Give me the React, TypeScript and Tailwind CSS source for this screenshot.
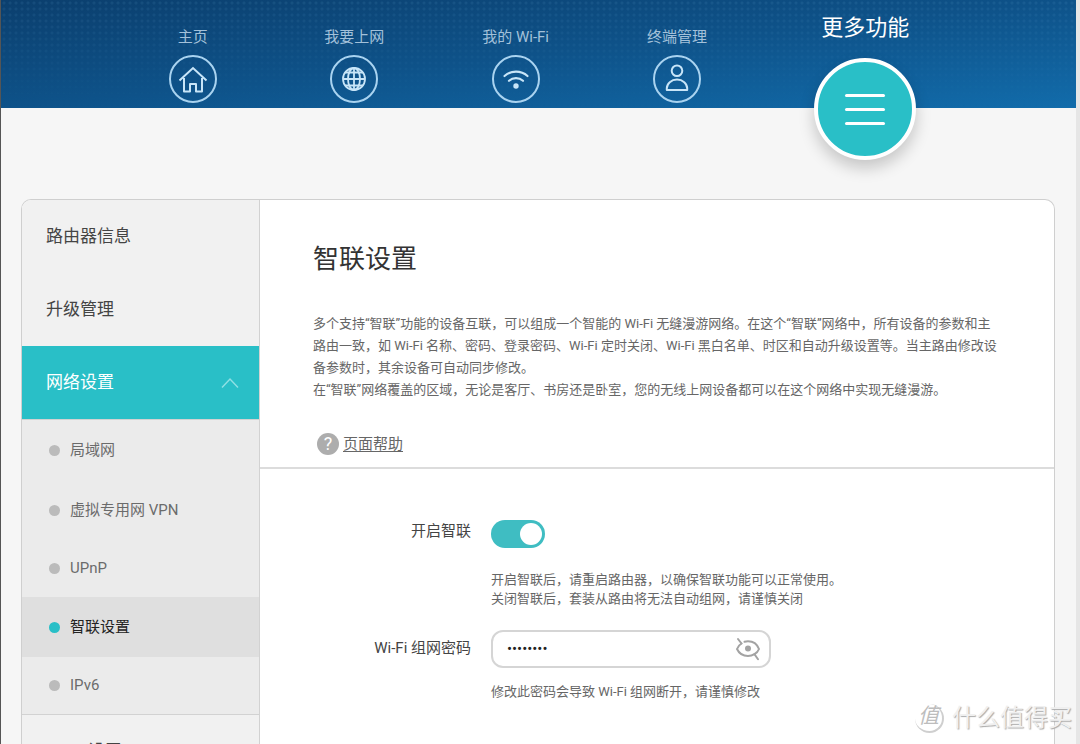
import { useState } from 'react';
import type { ReactNode } from 'react';
import clsx from 'clsx';

type NavItem = {
	label: string;
	icon: ReactNode;
};

type SubItem = {
	label: string;
	active?: boolean;
	latin?: boolean;
};

const HomeIcon = () => (
	<svg viewBox="0 0 44 44" className="size-full" fill="none" stroke="currentColor" strokeWidth="2">
		<path d="M8.500 23.500 22 11l13.500 12.500" />
		<path d="M13 21v13.500h6V27h6v7.500h6V21" strokeLinejoin="round" />
	</svg>
);

const GlobeIcon = () => (
	<svg viewBox="0 0 44 44" className="size-full" fill="none" stroke="currentColor" strokeWidth="1.8">
		<circle cx="22" cy="22" r="11" />
		<ellipse cx="22" cy="22" rx="6" ry="11" />
		<path d="M22 11v22M11 22h22M13.500 15.500h17M13.500 28.500h17" />
	</svg>
);

const WifiIcon = () => (
	<svg viewBox="0 0 44 44" className="size-full" fill="none" stroke="currentColor" strokeWidth="2.200" strokeLinecap="round">
		<path d="M10.500 19c6.500-5.800 16.500-5.800 23 0" />
		<path d="M15 23.800c4-3.700 10-3.700 14 0" />
		<circle cx="22" cy="29" r="2.700" fill="currentColor" stroke="none" />
	</svg>
);

const UserIcon = () => (
	<svg viewBox="0 0 44 44" className="size-full" fill="none" stroke="currentColor" strokeWidth="2">
		<circle cx="22" cy="13.800" r="5.300" />
		<path d="M11.800 33v-1.700c0-4.800 4.500-8.700 10.200-8.700s10.200 3.900 10.200 8.700V33z" strokeLinejoin="round" />
	</svg>
);

const EyeOffIcon = () => (
	<svg viewBox="0 0 26 24" className="h-6 w-[26px]" fill="none" stroke="currentColor" strokeWidth="2" strokeLinecap="round">
		<path d="M6.500 6.500C4.300 7.800 2.800 9.600 2 12c2 4.300 6.300 7 11 7 2.400 0 4.600-.7 6.500-1.800" />
		<path d="M9.500 4.800c1.100-.4 2.300-.6 3.500-.6 4.900 0 9.200 3 11 7.800-.8 2.100-2.200 3.900-4.500 5.200" />
		<path d="M3 2l3.500 4.500M19.500 17.200l3.500 5" />
		<circle cx="13" cy="11.600" r="3" fill="currentColor" stroke="none" />
	</svg>
);

const navItems: NavItem[] = [
	{ label: '主页', icon: <HomeIcon /> },
	{ label: '我要上网', icon: <GlobeIcon /> },
	{ label: '我的 Wi-Fi', icon: <WifiIcon /> },
	{ label: '终端管理', icon: <UserIcon /> },
];

const subItems: SubItem[] = [
	{ label: '局域网' },
	{ label: '虚拟专用网 VPN' },
	{ label: 'UPnP', latin: true },
	{ label: '智联设置', active: true },
	{ label: 'IPv6', latin: true },
];

const Header = () => (
	<header className="relative h-[108px] shrink-0 bg-linear-to-br from-[#0b3f6e] via-[#0e5289] to-[#126cab]">
		<div className="absolute inset-0 bg-[radial-gradient(rgba(120,190,230,0.1)_1px,transparent_2px)] bg-size-[6px_6px] mask-[linear-gradient(black,transparent)]" />
		<nav className="relative flex pr-[103px] pl-[111px]">
			{navItems.map((item) => (
				<a key={item.label} href="#" className="flex flex-3 flex-col items-center gap-1.5 pt-[25px] text-[#a3c1da]">
					<span className="text-[15px] leading-6">{item.label}</span>
					<span className="size-12 rounded-full border-2 border-[#a9d3f0] text-[#c8e5f8]">
						{item.icon}
					</span>
				</a>
			))}
			<a href="#" aria-current="page" className="flex flex-4 flex-col items-center gap-4 pt-3.5 text-white">
				<span className="text-[22px] leading-7">更多功能</span>
				<span className="flex size-[102px] flex-col items-center justify-center gap-[11px] rounded-full border-4 border-white bg-[#29bfc7] shadow-[0_8px_16px_rgba(0,0,0,0.2)]">
					<span className="h-[3px] w-10 rounded-full bg-white" />
					<span className="h-[3px] w-10 rounded-full bg-white" />
					<span className="h-[3px] w-10 rounded-full bg-white" />
				</span>
			</a>
		</nav>
	</header>
);

const Sidebar = () => (
	<aside className="w-[238px] shrink-0 border-r border-[#d2d2d2] bg-[#f1f1f1] text-[17px] text-[#444]">
		<a href="#" className="flex h-[73px] items-center px-6">路由器信息</a>
		<a href="#" className="flex h-[73px] items-center px-6">升级管理</a>
		<button type="button" aria-expanded="true" className="flex h-[73px] w-full items-center justify-between bg-[#29bfc7] pr-5 pl-6 text-white">
			网络设置
			<svg viewBox="0 0 18 12" className="h-3 w-[18px] text-[#8fe0e4]" fill="none" stroke="currentColor" strokeWidth="1.500">
				<path d="M1 10.500 9 2l8 8.500" />
			</svg>
		</button>
		<ul className="border-y border-[#d2d2d2] bg-[#ebebeb] text-[15px] text-[#6b6b6b]">
			{subItems.map((item) => (
				<li key={item.label}>
					<a
						href="#"
						className={clsx(
							'flex items-center gap-[10px] pl-[27px]',
							item.latin ? 'h-[57px]' : 'h-[60px]',
							item.active && 'bg-[#dfdfdf] text-[#222]',
						)}
					>
						<span className={clsx('size-[11px] rounded-full', item.active ? 'bg-[#29bfc7]' : 'bg-[#bbb]')} />
						{item.label}
					</a>
				</li>
			))}
		</ul>
		<a href="#" className="flex h-[73px] items-center px-6">Wi-Fi 设置</a>
	</aside>
);

const Intro = () => (
	<section className="border-b-2 border-[#dcdcdc] px-[53px] pt-[41px] pb-[11px] text-[#666]">
		<h1 className="text-[26px] leading-9 text-[#333]">智联设置</h1>
		<div className="mt-9 text-[13px] leading-[22px]">
			<p>
				多个支持“智联”功能的设备互联，可以组成一个智能的 Wi-Fi 无缝漫游网络。在这个“智联”网络中，所有设备的参数和主路由一致，如 Wi-Fi 名称、密码、登录密码、Wi-Fi 定时关闭、Wi-Fi 黑白名单、时区和自动升级设置等。当主路由修改设备参数时，其余设备可自动同步修改。
			</p>
			<p>
				在“智联”网络覆盖的区域，无论是客厅、书房还是卧室，您的无线上网设备都可以在这个网络中实现无缝漫游。
			</p>
		</div>
		<a href="#" className="mt-[31px] flex w-fit items-center gap-1 pl-1 text-[15px] leading-6">
			<span className="flex size-[22px] items-center justify-center rounded-full bg-[#adadad] text-lg text-white">?</span>
			<span className="underline underline-offset-2">页面帮助</span>
		</a>
	</section>
);

const MeshForm = () => {
	const [enabled, setEnabled] = useState(true);
	const [password, setPassword] = useState('12345678');
	const [visible, setVisible] = useState(false);

	return (
		<form className="grid grid-cols-[211px_1fr] gap-x-5 pt-[50px] text-[13px] leading-[19px] text-[#666]">
			<label htmlFor="mesh" className="text-right text-[15px] leading-6 text-[#444]">开启智联</label>
			<div>
				<input
					id="mesh"
					type="checkbox"
					role="switch"
					checked={enabled}
					onChange={(e) => setEnabled(e.target.checked)}
					className="mt-px block h-7 w-[54px] appearance-none rounded-full bg-[#bbb] p-[3px] before:block before:size-[22px] before:rounded-full before:bg-white checked:bg-[#3fbdc2] checked:before:ml-auto"
				/>
				<p className="mt-[22px]">
					开启智联后，请重启路由器，以确保智联功能可以正常使用。
					<br />
					关闭智联后，套装从路由将无法自动组网，请谨慎关闭
				</p>
			</div>
			<label htmlFor="password" className="mt-7 text-right text-[15px] leading-6 text-[#444]">Wi-Fi 组网密码</label>
			<div className="mt-[22px]">
				<div className="flex h-[38px] w-[280px] items-center justify-between rounded-xl border-2 border-[#d5d5d5] bg-white pr-2 pl-3.5">
					<input
						id="password"
						type={visible ? 'text' : 'password'}
						value={password}
						onChange={(e) => setPassword(e.target.value)}
						className="min-w-0 flex-1 text-[15px] text-[#222] outline-none"
					/>
					<button type="button" aria-label="显示密码" onClick={() => setVisible(!visible)} className="text-[#a3a3a3]">
						<EyeOffIcon />
					</button>
				</div>
				<p className="mt-[14px]">修改此密码会导致 Wi-Fi 组网断开，请谨慎修改</p>
			</div>
		</form>
	);
};

const Watermark = () => (
	<div className="absolute right-1 bottom-2.5 flex items-center gap-2 text-[#f0f0f0] [text-shadow:1px_1px_1px_#aaa]">
		<span className="flex size-[29px] items-center justify-center rounded-full border-r-2 border-b-2 border-[#cfcfcf] text-[21px] text-[#bdbdbd] italic [text-shadow:none]">值</span>
		<span className="text-2xl leading-8">什么值得买</span>
	</div>
);

export default function App() {
	return (
		<div className="relative flex h-screen flex-col overflow-hidden border-r-4 border-l border-r-[#e6e6e6] border-l-[#555] bg-[#f6f6f6] font-[Roboto,'Noto_Sans_CJK_SC',sans-serif]" lang="zh-CN">
			<Header />
			<div className="mt-[91px] mr-[21px] ml-5 flex shrink-0 overflow-hidden rounded-t-[10px] border border-b-0 border-[#cfcfcf] bg-white">
				<Sidebar />
				<main className="min-w-0 flex-1">
					<Intro />
					<MeshForm />
				</main>
			</div>
			<Watermark />
		</div>
	);
}
